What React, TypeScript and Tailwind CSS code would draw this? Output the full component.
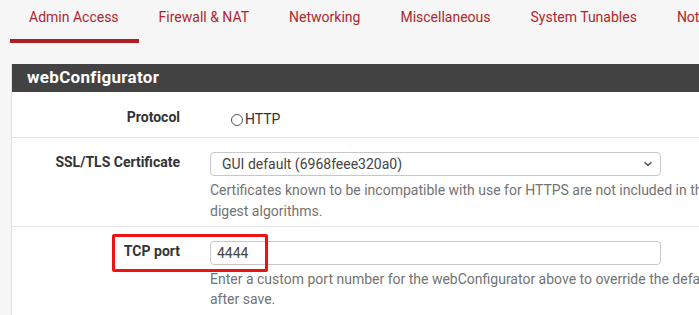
import { ChevronDown } from 'lucide-react';

const tabs = ['Admin Access', 'Firewall & NAT', 'Networking', 'Miscellaneous', 'System Tunables', 'Notifications'];

export default function App() {
  return (
    <div
      className="relative w-[699px] h-[315px] overflow-hidden bg-[#f6f6f6] text-[#333]"
      style={{ fontFamily: 'Roboto, "Liberation Sans", sans-serif' }}
    >
      {/* Onglets */}
      <div className="flex pl-[10px] h-[43px] whitespace-nowrap">
        {tabs.map((t, i) => (
          <div
            key={t}
            className={`shrink-0 h-full px-[20px] pt-[7px] text-[14px] text-[#b0262b] ${i === 0 ? 'pl-[19px] border-b-[4px] border-[#b01e23]' : ''}`}
          >
            {t}
          </div>
        ))}
      </div>

      {/* Panneau */}
      <div className="ml-[11px] mt-[21px] w-[1100px] bg-white border-l border-[#e0e0e0]">
        <div className="h-[28px] bg-[#424242] pl-[15px] flex items-center text-white font-bold text-[17px] tracking-[0.3px]">
          webConfigurator
        </div>

        {/* Protocol */}
        <div className="flex h-[46px] border-b border-[#e4e4e4]">
          <div className="shrink-0 w-[168px] pt-[15px] text-right font-bold text-[14px] text-[#333]">Protocol</div>
          <div className="ml-[51px] pt-[17px] flex items-center text-[14px] text-[#333] h-fit">
            <span className="w-[12px] h-[12px] rounded-full border border-[#555] mr-[2px]" />
            HTTP
          </div>
        </div>

        {/* SSL/TLS */}
        <div className="flex h-[89px] border-b border-[#e4e4e4]">
          <div className="shrink-0 w-[168px] pt-[14px] text-right font-bold text-[14px] text-[#333]">SSL/TLS Certificate</div>
          <div className="shrink-0 ml-[30px] pt-[14px]">
            <div className="w-[451px] h-[24px] border border-[#c8c8c8] rounded-[4px] flex items-center justify-between pl-[11px] pr-[6px] text-[14px] text-[#444]">
              GUI default (6968feee320a0)
              <ChevronDown className="w-[12px] h-[12px] text-[#555]" strokeWidth={3} />
            </div>
            <div className="mt-[4px] text-[14px] leading-[21px] text-[#737373] whitespace-nowrap">
              <div>Certificates known to be incompatible with use for HTTPS are not included in this list, such as certificates using incompatible ECDSA curves or weak</div>
              <div>digest algorithms.</div>
            </div>
          </div>
        </div>

        {/* TCP port */}
        <div className="flex h-[100px]">
          <div className="shrink-0 w-[168px] pt-[14px] text-right font-bold text-[14px] text-[#333]">TCP port</div>
          <div className="shrink-0 ml-[30px] pt-[14px]">
            <div className="w-[451px] h-[24px] border border-[#c8c8c8] rounded-[4px] flex items-center pl-[6px] text-[14px] text-[#444]">
              4444
            </div>
            <div className="mt-[4px] text-[14px] leading-[20px] text-[#737373] whitespace-nowrap">
              <div>Enter a custom port number for the webConfigurator above to override the default (80 for HTTP, 443 for HTTPS). Changes will take effect immediately</div>
              <div>after save.</div>
            </div>
          </div>
        </div>
      </div>

      {/* Encadré rouge d'annotation */}
      <div className="absolute left-[112px] top-[234px] w-[156px] h-[38px] border-[3px] border-[#ee1111] rounded-[2px]" />
    </div>
  );
}
